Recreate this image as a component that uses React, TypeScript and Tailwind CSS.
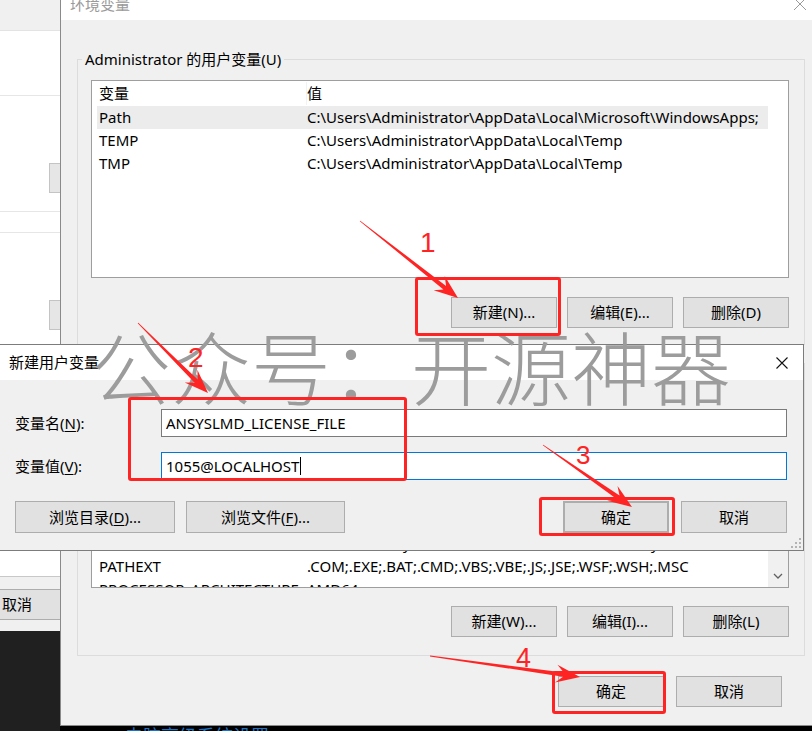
import React from "react";

const ui = "font-['Noto_Sans','Noto_Sans_CJK_SC',sans-serif]";

type BtnProps = { children: React.ReactNode; className?: string };

const WinButton = ({ children, className = "" }: BtnProps) => (
  <button
    className={`flex h-[31px] w-[106px] items-center justify-center border border-[#adadad] bg-[#e1e1e1] text-[15px] leading-none text-black ${className}`}
  >
    {children}
  </button>
);

// tapered arrow, tail -> tip
const arrowPoints = (tx: number, ty: number, hx: number, hy: number) => {
  const len = Math.hypot(hx - tx, hy - ty);
  const dx = (hx - tx) / len;
  const dy = (hy - ty) / len;
  const nx = -dy;
  const ny = dx;
  const L = 24;
  const W = 9;
  const bx = hx - dx * L;
  const by = hy - dy * L;
  const sx = hx - dx * L * 0.7;
  const sy = hy - dy * L * 0.7;
  const pts = [
    [tx + nx * 0.4, ty + ny * 0.4],
    [sx + nx * 2.2, sy + ny * 2.2],
    [bx + nx * W, by + ny * W],
    [hx, hy],
    [bx - nx * W, by - ny * W],
    [sx - nx * 2.2, sy - ny * 2.2],
    [tx - nx * 0.4, ty - ny * 0.4],
  ];
  return pts.map((p) => `${p[0].toFixed(1)},${p[1].toFixed(1)}`).join(" ");
};

const userVars = [
  { name: "Path", value: "C:\\Users\\Administrator\\AppData\\Local\\Microsoft\\WindowsApps;", selected: true },
  { name: "TEMP", value: "C:\\Users\\Administrator\\AppData\\Local\\Temp" },
  { name: "TMP", value: "C:\\Users\\Administrator\\AppData\\Local\\Temp" },
];

const sysVars = [
  { name: "ComSpec", value: "C:\\Windows\\system32\\cmd.exe" },
  { name: "DriverData", value: "C:\\Windows\\System32\\Drivers\\DriverData" },
  { name: "NUMBER_OF_PROCESSORS", value: "8" },
  { name: "OS", value: "Windows_NT" },
  { name: "Path", value: "C:\\Windows\\system32;C:\\Windows;C:\\Windows\\System32\\Wbem;" },
  { name: "PATHEXT", value: ".COM;.EXE;.BAT;.CMD;.VBS;.VBE;.JS;.JSE;.WSF;.WSH;.MSC" },
  { name: "PROCESSOR_ARCHITECTURE", value: "AMD64" },
];

const Row = ({ name, value, selected }: { name: string; value: string; selected?: boolean }) => (
  <div className={`flex h-[23px] w-[671px] items-center pl-[2px] text-[15px] text-black ${selected ? "bg-[#ececec]" : ""}`}>
    <div className="w-[208px] shrink-0 whitespace-nowrap">{name}</div>
    <div className="whitespace-nowrap">{value}</div>
  </div>
);

export default function App() {
  return (
    <div className={`relative h-[731px] w-[812px] overflow-hidden bg-[#202020] ${ui}`}>
      {/* window behind, on the left */}
      <div className="absolute left-[-300px] top-0 flex h-[631px] w-[361px] flex-col bg-white">
        <div className="h-[31px] border-b border-[#e3e3e3] bg-[#f0f0f0]" />
        <div className="h-[65px] border-b border-[#e6e6e6]" />
        <div className="h-[116px] border-b border-[#e6e6e6] pt-[67px]">
          <div className="ml-auto h-[30px] w-[12px] border border-[#c4c4c4] bg-[#e6e6e6]" />
        </div>
        <div className="h-[21px] border-b border-[#e6e6e6]" />
        <div className="h-[344px] border-b border-[#c8c8c8] pt-[67px]">
          <div className="ml-auto h-[30px] w-[12px] border border-[#c4c4c4] bg-[#e6e6e6]" />
        </div>
        <div className="flex flex-1 flex-col justify-center bg-[#f0f0f0]">
          <div className="flex h-[31px] w-[361px] items-center justify-end border border-[#adadad] bg-[#e1e1e1] pr-[28px] text-[15px] text-black">
            取消
          </div>
        </div>
      </div>

      {/* bottom desktop strip */}
      <div className="absolute left-[60px] top-[726px] h-[10px] w-[760px] bg-black pl-[65px]">
        <span className="relative top-[1px] block whitespace-nowrap text-[18px] leading-none text-[#1a73c9]">电脑高级系统设置</span>
      </div>

      {/* 环境变量 main window */}
      <div className="absolute left-[60px] top-[-12px] flex h-[738px] w-[762px] flex-col border border-[#8a8a8a] border-t-0 bg-[#f0f0f0]">
        <div className="flex h-[32px] shrink-0 items-center justify-between bg-white pl-[9px] pr-[14px]">
          <span className="text-[15px] text-[#9a9a9a]">环境变量</span>
          <svg width="14" height="14" viewBox="0 0 14 14" className="text-[#9a9a9a]">
            <path d="M1 1 L13 13 M13 1 L1 13" stroke="currentColor" strokeWidth="1" />
          </svg>
        </div>

        <div className="flex flex-1 flex-col pl-[16px] pt-[39px]">
          {/* user variables group */}
          <div className="relative w-[728px] border border-[#dcdcdc] pb-[16px] pl-[13px] pt-[20px]">
            <span className="absolute left-[4px] top-[-11px] bg-[#f0f0f0] px-[3px] text-[15px] leading-[20px] text-black">
              Administrator 的用户变量(U)
            </span>
            <div className="h-[198px] w-[698px] border border-[#9e9e9e] bg-white pl-[5px]">
              <div className="flex h-[25px] w-[671px] items-center pl-[2px] text-[15px] text-black">
                <div className="w-[208px] border-r border-[#f2f2f2]">变量</div>
                <div>值</div>
              </div>
              {userVars.map((v) => (
                <Row key={v.name} {...v} />
              ))}
            </div>
            <div className="mt-[19px] flex w-[698px] justify-end gap-[10px]">
              <WinButton>新建(N)...</WinButton>
              <WinButton>编辑(E)...</WinButton>
              <WinButton>删除(D)</WinButton>
            </div>
          </div>

          {/* system variables group */}
          <div className="relative mt-[18px] w-[728px] border border-[#dcdcdc] pb-[18px] pl-[13px] pt-[20px]">
            <span className="absolute left-[4px] top-[-11px] bg-[#f0f0f0] px-[3px] text-[15px] leading-[20px] text-black">
              系统变量(S)
            </span>
            <div className="flex h-[204px] w-[698px] overflow-hidden border border-[#9e9e9e] bg-white">
              <div className="flex-1 overflow-hidden pl-[5px] pt-[30px]">
                <div className="flex h-[25px] items-center pl-[2px] text-[15px] text-black">
                  <div className="w-[208px]">变量</div>
                  <div>值</div>
                </div>
                {sysVars.map((v) => (
                  <Row key={v.name} {...v} />
                ))}
              </div>
              <div className="flex w-[20px] flex-col justify-end bg-[#f0f0f0]">
                <div className="flex h-[23px] items-center justify-center">
                  <svg width="10" height="6" viewBox="0 0 10 6">
                    <path d="M1 1 L5 5 L9 1" fill="none" stroke="#606060" strokeWidth="1.3" />
                  </svg>
                </div>
              </div>
            </div>
            <div className="mt-[18px] flex w-[698px] justify-end gap-[10px]">
              <WinButton>新建(W)...</WinButton>
              <WinButton>编辑(I)...</WinButton>
              <WinButton>删除(L)</WinButton>
            </div>
          </div>

          <div className="mt-[20px] flex w-[705px] justify-end gap-[12px]">
            <WinButton className="w-[105px]">确定</WinButton>
            <WinButton className="w-[105px]">取消</WinButton>
          </div>
        </div>
      </div>

      {/* 新建用户变量 dialog */}
      <div className="absolute left-[-1px] top-[344px] flex h-[207px] w-[805px] flex-col border border-[#7c7c7c]">
        <div className="flex h-[35px] shrink-0 items-center justify-between bg-white pl-[9px] pr-[15px]">
          <span className="text-[15px] text-black">新建用户变量</span>
          <svg width="12" height="12" viewBox="0 0 12 12">
            <path d="M0.5 0.5 L11.5 11.5 M11.5 0.5 L0.5 11.5" stroke="#111" strokeWidth="1.1" />
          </svg>
        </div>
        <div className="relative flex flex-1 flex-col bg-[#f0f0f0] pl-[15px] pt-[29px]">
          <div className="flex h-[28px] items-center">
            <div className="w-[146px] text-[15px] text-black">
              变量名(<span className="underline underline-offset-2">N</span>):
            </div>
            <div className="flex h-[28px] w-[626px] items-center border border-[#7a7a7a] bg-white pl-[4px] text-[15px] text-black">
              ANSYSLMD_LICENSE_FILE
            </div>
          </div>
          <div className="mt-[15px] flex h-[28px] items-center">
            <div className="w-[146px] text-[15px] text-black">
              变量值(<span className="underline underline-offset-2">V</span>):
            </div>
            <div className="flex h-[28px] w-[626px] items-center border border-[#0078d7] bg-white pl-[4px] text-[15px] text-black">
              1055@LOCALHOST
              <span className="ml-[1px] h-[18px] w-px bg-black" />
            </div>
          </div>
          <div className="mt-[21px] flex items-center">
            <WinButton className="h-[32px] w-[160px]">
              浏览目录(<span className="underline underline-offset-2">D</span>)...
            </WinButton>
            <WinButton className="ml-[11px] h-[32px] w-[159px]">
              浏览文件(<span className="underline underline-offset-2">F</span>)...
            </WinButton>
            <WinButton className="ml-[218px] h-[32px] w-[105px] border-2 border-[#0078d7]">确定</WinButton>
            <WinButton className="ml-[12px] h-[32px] w-[106px]">取消</WinButton>
          </div>
          <svg width="10" height="10" viewBox="0 0 10 10" className="absolute bottom-[2px] right-[2px]">
            <g fill="#b4b4b4">
              <rect x="8" y="0" width="2" height="2" />
              <rect x="4" y="4" width="2" height="2" />
              <rect x="8" y="4" width="2" height="2" />
              <rect x="0" y="8" width="2" height="2" />
              <rect x="4" y="8" width="2" height="2" />
              <rect x="8" y="8" width="2" height="2" />
            </g>
          </svg>
        </div>
      </div>

      {/* watermark */}
      <div className="pointer-events-none absolute left-[91px] top-[324px] whitespace-nowrap font-['Noto_Sans_CJK_SC',sans-serif] text-[80px] font-extralight leading-none text-[#9c9c9c]">
        公众号：开源神器
      </div>

      {/* annotations */}
      <div className="pointer-events-none absolute left-[415px] top-[277px] h-[59px] w-[146px] rounded-[3px] border-[3px] border-[#ff2424]" />
      <div className="pointer-events-none absolute left-[128px] top-[397px] h-[84px] w-[279px] rounded-[3px] border-[3px] border-[#ff2424]" />
      <div className="pointer-events-none absolute left-[539px] top-[497px] h-[39px] w-[136px] rounded-[3px] border-[3px] border-[#ff2424]" />
      <div className="pointer-events-none absolute left-[552px] top-[671px] h-[43px] w-[114px] rounded-[3px] border-[3px] border-[#ff2424]" />

      <svg className="pointer-events-none absolute left-0 top-0" width="812" height="731">
        <g fill="#ff2424">
          <polygon points={arrowPoints(360, 221, 458, 298)} />
          <polygon points={arrowPoints(138, 323, 208, 393)} />
          <polygon points={arrowPoints(543, 445, 632, 507)} />
          <polygon points={arrowPoints(430, 656, 580, 677)} />
        </g>
      </svg>

      <span className="pointer-events-none absolute left-[420px] top-[229px] font-['Liberation_Sans',sans-serif] text-[28px] leading-none text-[#ff2424]">1</span>
      <span className="pointer-events-none absolute left-[188px] top-[344px] font-['Liberation_Sans',sans-serif] text-[28px] leading-none text-[#ff2424]">2</span>
      <span className="pointer-events-none absolute left-[576px] top-[442px] font-['Liberation_Sans',sans-serif] text-[26px] leading-none text-[#ff2424]">3</span>
      <span className="pointer-events-none absolute left-[516px] top-[645px] font-['Liberation_Sans',sans-serif] text-[27px] leading-none text-[#ff2424]">4</span>
    </div>
  );
}
